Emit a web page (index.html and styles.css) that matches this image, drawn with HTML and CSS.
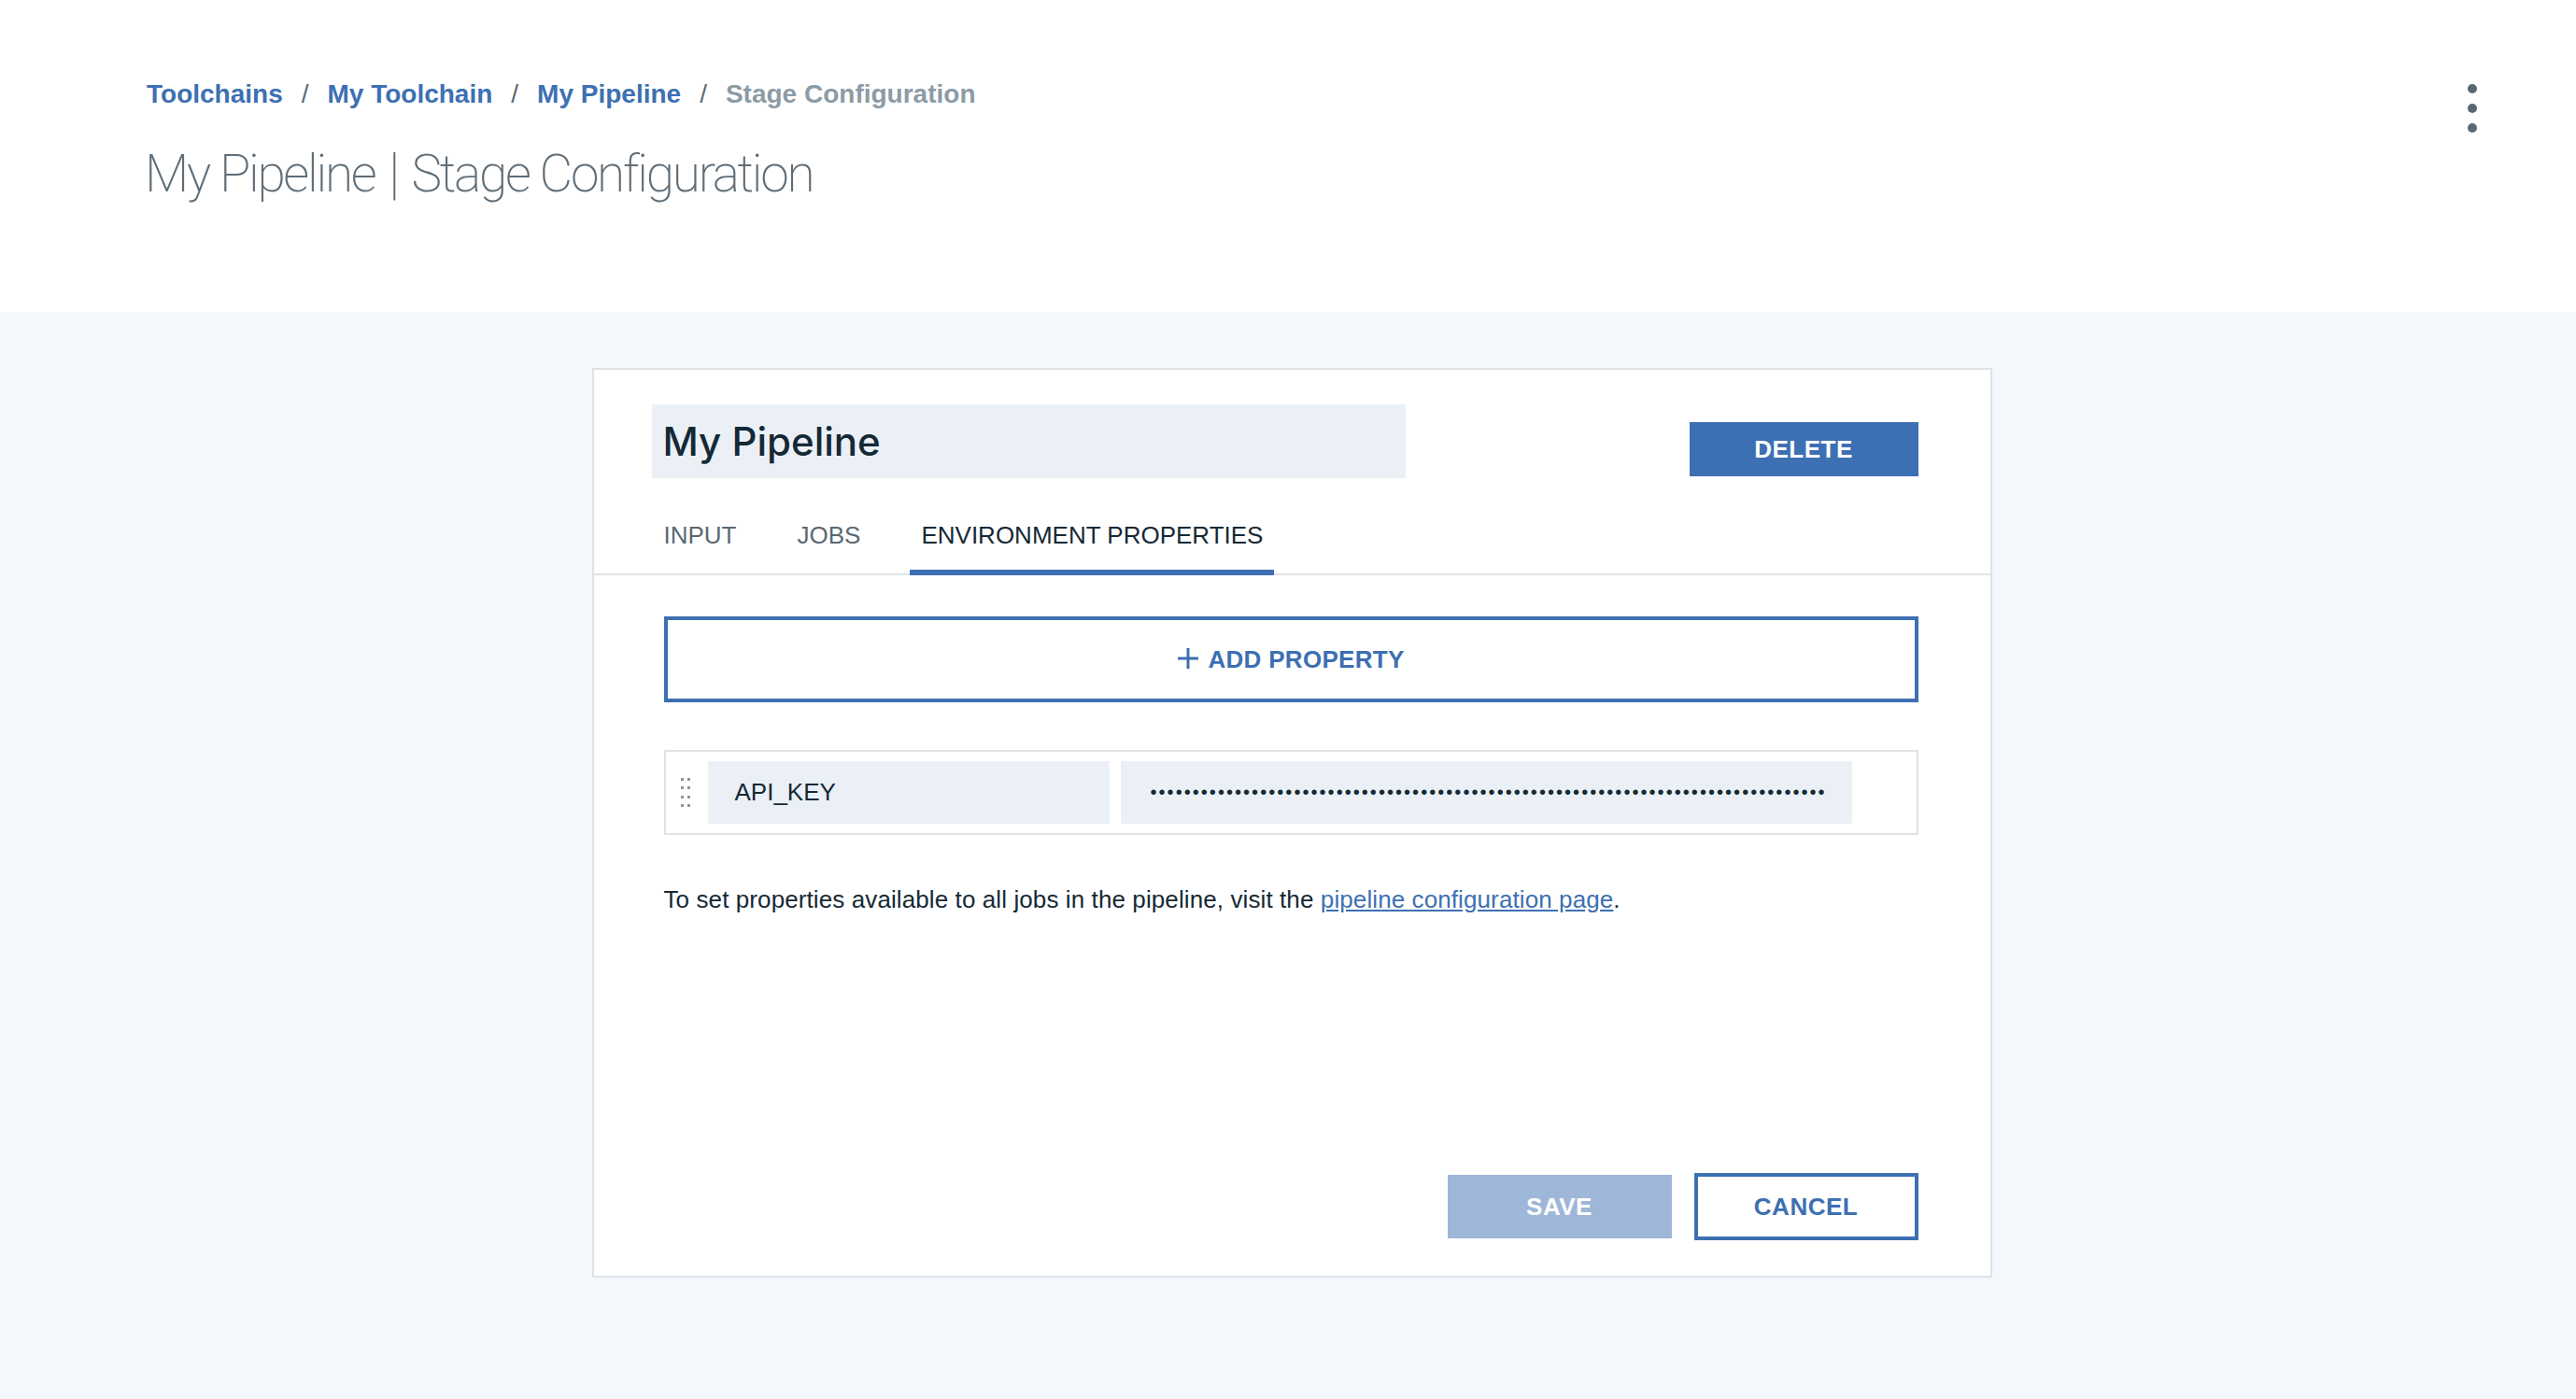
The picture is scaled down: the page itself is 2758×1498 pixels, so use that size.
FILE: index.html
```html
<!DOCTYPE html>
<html lang="en">
<head>
<meta charset="utf-8">
<title>My Pipeline | Stage Configuration</title>
<link rel="stylesheet" href="styles.css">
</head>
<body>
<header class="page-header">
  <div class="header-main">
    <nav class="breadcrumb">
      <a class="crumb" href="#">Toolchains</a>
      <span class="sep">/</span>
      <a class="crumb" href="#">My Toolchain</a>
      <span class="sep">/</span>
      <a class="crumb" href="#">My Pipeline</a>
      <span class="sep">/</span>
      <span class="crumb current">Stage Configuration</span>
    </nav>
    <h1 class="page-title">My Pipeline <span class="bar">|</span> Stage Configuration</h1>
  </div>
  <button class="kebab" aria-label="More options">
    <span class="dot"></span><span class="dot"></span><span class="dot"></span>
  </button>
</header>

<main class="page-body">
  <section class="card">
    <div class="card-head">
      <div class="name-field">My Pipeline</div>
      <button class="btn btn-primary btn-delete">DELETE</button>
    </div>
    <div class="tabs">
      <div class="tab">INPUT</div>
      <div class="tab">JOBS</div>
      <div class="tab active">ENVIRONMENT PROPERTIES</div>
    </div>
    <div class="card-content">
      <button class="add-property">
        <svg class="plus" width="24" height="24" viewBox="0 0 24 24" aria-hidden="true"><path d="M12 1v22M1 12h22" stroke="#3d70b2" stroke-width="3" fill="none"/></svg>
        <span>ADD PROPERTY</span>
      </button>
      <div class="prop-row">
        <div class="handle" aria-hidden="true">
          <i></i><i></i><i></i><i></i><i></i><i></i><i></i><i></i>
        </div>
        <div class="field key-field">API_KEY</div>
        <div class="field value-field"><span class="dots">••••••••••••••••••••••••••••••••••••••••••••••••••••••••••••••••••••••••••••••••</span></div>
      </div>
      <p class="helper">To set properties available to all jobs in the pipeline, visit the <a href="#">pipeline configuration page</a>.</p>
      <div class="card-actions">
        <button class="btn btn-disabled">SAVE</button>
        <button class="btn btn-secondary">CANCEL</button>
      </div>
    </div>
  </section>
</main>
</body>
</html>
```

FILE: styles.css
```css
* { box-sizing: border-box; }

html, body {
  margin: 0;
  padding: 0;
}

body {
  font-family: "Liberation Sans", Arial, Helvetica, sans-serif;
  color: #152935;
  background: #f4f7fb;
  min-height: 1498px;
}

.page-header {
  background: #ffffff;
  height: 334px;
  display: flex;
  justify-content: space-between;
  align-items: flex-start;
  padding: 85px 106px 0 155px;
}

.breadcrumb {
  font-size: 28px;
  line-height: 32px;
  font-weight: 700;
  display: flex;
  align-items: baseline;
  padding-left: 2px;
}

.crumb {
  color: #3d70b2;
  text-decoration: none;
}

.crumb.current {
  color: #8c9ba5;
}

.sep {
  color: #5a6872;
  font-weight: 400;
  margin: 0 20px;
}

.page-title {
  margin: 35px 0 0 0;
  font-family: Roboto, "Liberation Sans", sans-serif;
  font-weight: 200;
  font-size: 55px;
  line-height: 68px;
  letter-spacing: -2.3px;
  color: #5f6d77;
}

.page-title .bar {
  display: inline-block;
  margin: 0 4px;
  transform: scaleY(1.12);
}

.kebab {
  margin-top: 5px;
  border: 0;
  background: transparent;
  padding: 0;
  display: flex;
  flex-direction: column;
  gap: 11px;
  cursor: pointer;
}

.kebab .dot {
  display: block;
  width: 10px;
  height: 10px;
  border-radius: 50%;
  background: #5a6872;
}

.page-body {
  padding-top: 60px;
  display: flex;
  justify-content: center;
}

.card {
  width: 1499px;
  min-height: 974px;
  background: #ffffff;
  border: 2px solid #dfe3e6;
  display: flex;
  flex-direction: column;
  margin-left: 8px;
}

.card-head {
  display: flex;
  justify-content: space-between;
  align-items: flex-start;
  padding: 37px 77px 0 75px;
}

.name-field {
  margin-left: -13px;
  width: 807px;
  height: 79px;
  background: #ebf0f7;
  font-family: Inter, "Liberation Sans", sans-serif;
  font-weight: 500;
  font-size: 42px;
  line-height: 79px;
  padding-left: 12px;
  color: #152935;
}

.btn {
  font-family: "Liberation Sans", Arial, sans-serif;
  font-weight: 700;
  font-size: 26px;
  letter-spacing: 0.5px;
  border: 0;
  cursor: pointer;
}

.btn-primary {
  background: #3d70b2;
  color: #ffffff;
}

.btn-delete {
  margin-top: 19px;
  width: 245px;
  height: 58px;
}

.tabs {
  margin-top: 46px;
  display: flex;
  gap: 41px;
  padding-left: 63px;
  border-bottom: 2px solid #dfe3e6;
}

.tab {
  font-size: 26px;
  line-height: 30px;
  padding: 0 12px 22px;
  color: #5a6872;
  border-bottom: 6px solid transparent;
  margin-bottom: -2px;
}

.tab.active {
  color: #152935;
  border-bottom-color: #3d70b2;
}

.card-content {
  flex: 1;
  display: flex;
  flex-direction: column;
  padding: 0 77px 38px 75px;
}

.add-property {
  margin-top: 44px;
  height: 92px;
  width: 100%;
  background: #ffffff;
  border: 4px solid #3d70b2;
  color: #3d70b2;
  font-family: "Liberation Sans", Arial, sans-serif;
  font-weight: 700;
  font-size: 26px;
  letter-spacing: 0.3px;
  display: flex;
  align-items: center;
  justify-content: center;
  gap: 9px;
  cursor: pointer;
  padding: 0;
}

.add-property .plus {
  margin-top: -2px;
}

.prop-row {
  margin-top: 51px;
  height: 91px;
  border: 2px solid #dfe3e6;
  display: flex;
  align-items: center;
  padding: 0 69px 0 16px;
}

.handle {
  display: grid;
  grid-template-columns: 3px 3px;
  column-gap: 4px;
  row-gap: 6.5px;
  margin-right: 19px;
}

.handle i {
  display: block;
  width: 3px;
  height: 3px;
  background: #8897a2;
}

.field {
  height: 67px;
  background: #ebf0f7;
  font-size: 26px;
  display: flex;
  align-items: center;
  color: #152935;
}

.key-field {
  width: 430px;
  padding-left: 29px;
}

.value-field {
  margin-left: 12px;
  flex: 1;
  padding-left: 32px;
  overflow: hidden;
}

.dots {
  font-size: 20px;
  letter-spacing: 2.05px;
  white-space: nowrap;
}

.helper {
  margin: 54px 0 0 0;
  font-size: 26px;
  line-height: 30px;
  letter-spacing: 0.1px;
  color: #152935;
}

.helper a {
  color: #3d70b2;
}

.card-actions {
  margin-top: auto;
  display: flex;
  justify-content: flex-end;
  align-items: center;
  gap: 24px;
}

.btn-disabled {
  width: 240px;
  height: 68px;
  background: #9eb7d8;
  color: #ffffff;
  cursor: default;
}

.btn-secondary {
  width: 240px;
  height: 72px;
  background: #ffffff;
  border: 4px solid #3d70b2;
  color: #3d70b2;
}
```
